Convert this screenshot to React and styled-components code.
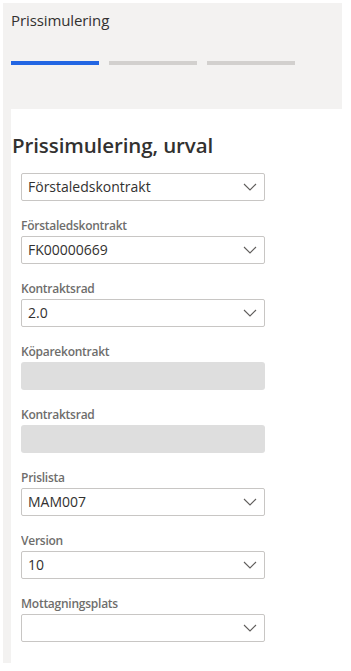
import React from 'react';
import styled, { createGlobalStyle } from 'styled-components';

const GlobalStyle = createGlobalStyle`
  body {
    margin: 0;
    background: #ffffff;
    font-family: "Open Sans", "Noto Sans", sans-serif;
  }
`;

const fields = [
  { label: 'Förstaledskontrakt', value: 'FK00000669' },
  { label: 'Kontraktsrad', value: '2.0' },
  { label: 'Köparekontrakt', disabled: true },
  { label: 'Kontraktsrad', disabled: true },
  { label: 'Prislista', value: 'MAM007' },
  { label: 'Version', value: '10' },
  { label: 'Mottagningsplats', value: '' },
];

function Chevron() {
  return (
    <svg width="14" height="8" viewBox="0 0 14 8" fill="none">
      <path d="M1 1l6 6 6-6" stroke="#605e5c" strokeWidth="1.1" />
    </svg>
  );
}

function Dropdown({ value }) {
  return (
    <SelectBox>
      <SelectValue>{value}</SelectValue>
      <Chevron />
    </SelectBox>
  );
}

export default function App() {
  return (
    <Page>
      <GlobalStyle />
      <Panel>
        <TabTitle>Prissimulering</TabTitle>
        <Steps>
          <Step active />
          <Step />
          <Step />
        </Steps>
        <Card>
          <Heading>Prissimulering, urval</Heading>
          <Form>
            <Dropdown value="Förstaledskontrakt" />
            {fields.map((f, i) => (
              <Field key={i}>
                <Label>{f.label}</Label>
                {f.disabled ? <DisabledBox /> : <Dropdown value={f.value} />}
              </Field>
            ))}
          </Form>
        </Card>
      </Panel>
    </Page>
  );
}

const Page = styled.div`
  padding: 3px 9px 0 3px;
  height: 671px;
  box-sizing: border-box;
`;

const Panel = styled.div`
  background: #f3f2f1;
  height: 660px;
  padding-left: 8px;
  display: flex;
  flex-direction: column;
`;

const TabTitle = styled.div`
  font-size: 15px;
  color: #323130;
  line-height: 18px;
  padding-top: 8px;
  letter-spacing: -0.1px;
`;

const Steps = styled.div`
  display: flex;
  gap: 10px;
  margin-top: 32px;
`;

const Step = styled.div`
  width: 88px;
  height: 4px;
  background: ${p => (p.active ? '#2266e3' : '#d2d0ce')};
`;

const Card = styled.div`
  flex: 1;
  background: #ffffff;
  margin-top: 44px;
  padding-top: 24px;
`;

const Heading = styled.h2`
  margin: 0 0 0 1px;
  font-size: 20.5px;
  font-weight: 600;
  color: #323130;
  line-height: 24px;
  letter-spacing: -0.1px;
`;

const Form = styled.div`
  display: flex;
  flex-direction: column;
  gap: 15px;
  padding-left: 10px;
  width: 244px;
  margin-top: 16px;
`;

const Field = styled.div`
  display: flex;
  flex-direction: column;
`;

const Label = styled.div`
  font-size: 12px;
  color: #605e5c;
  line-height: 20px;
  font-weight: 600;
  letter-spacing: -0.25px;
  opacity: 0.9;
`;

const SelectBox = styled.div`
  height: 28px;
  box-sizing: border-box;
  border: 1px solid #c8c6c4;
  border-radius: 2px;
  display: flex;
  align-items: center;
  justify-content: space-between;
  padding: 0 7px 0 6px;
  background: #ffffff;
`;

const SelectValue = styled.span`
  font-size: 14px;
  color: #323130;
  line-height: 20px;
`;

const DisabledBox = styled.div`
  height: 28px;
  border-radius: 3px;
  background: #dedede;
`;
